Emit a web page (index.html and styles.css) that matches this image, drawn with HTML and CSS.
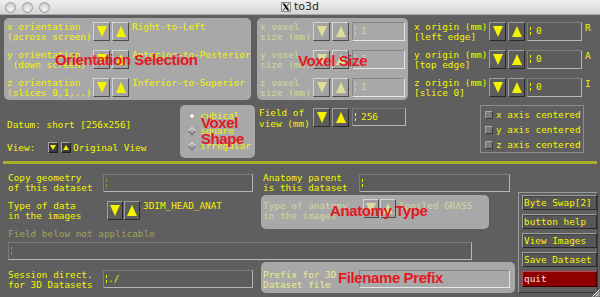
FILE: index.html
```html
<!DOCTYPE html>
<html lang="en">
<head>
    <meta charset="UTF-8">
    <title>to3d</title>
    <link rel="stylesheet" href="styles.css">
</head>
<body>
<div class="window">
    <div class="titlebar">
        <div class="lights"><span></span><span></span><span></span></div>
        <div class="title">
            <svg class="xlogo" width="10" height="10" viewBox="0 0 10 10">
                <rect x="0.5" y="0.5" width="9" height="9" fill="#e6e6e6" stroke="#8a8a8a"/>
                <polygon points="1.5,1.5 3.8,1.5 8.5,8.5 6.2,8.5" fill="#111"/>
                <polygon points="7.6,1.5 8.5,1.5 2.4,8.5 1.5,8.5" fill="#111"/>
            </svg>
            <span>to3d</span>
        </div>
        <div></div>
    </div>

    <div class="top">
        <div class="panel orient">
            <div class="row">
                <div class="lbl">x orientation<br>(across screen)</div>
                <div class="arrows"><span class="abtn dn"></span><span class="abtn up"></span></div>
                <div class="val">Right-to-Left</div>
            </div>
            <div class="row">
                <div class="lbl">y orientation<br>&nbsp;(down screen)</div>
                <div class="arrows"><span class="abtn dn"></span><span class="abtn up"></span></div>
                <div class="val">Anterior-to-Posterior</div>
            </div>
            <div class="row">
                <div class="lbl">z orientation<br>(slices 0,1,..)</div>
                <div class="arrows"><span class="abtn dn"></span><span class="abtn up"></span></div>
                <div class="val">Inferior-to-Superior</div>
            </div>
        </div>

        <div class="panel voxel dim">
            <div class="row">
                <div class="lbl">x voxel<br>size (mm)</div>
                <div class="arrows"><span class="abtn dn"></span><span class="abtn up"></span></div>
                <div class="field light"><i class="caret"></i><span>1</span></div>
            </div>
            <div class="row">
                <div class="lbl">y voxel<br>size (mm)</div>
                <div class="arrows"><span class="abtn dn"></span><span class="abtn up"></span></div>
                <div class="field light"><i class="caret"></i><span>1</span></div>
            </div>
            <div class="row">
                <div class="lbl">z voxel<br>size (mm)</div>
                <div class="arrows"><span class="abtn dn"></span><span class="abtn up"></span></div>
                <div class="field light"><i class="caret"></i><span>1</span></div>
            </div>
        </div>

        <div class="origin">
            <div class="row">
                <div class="lbl">x origin (mm)<br>[left edge]</div>
                <div class="arrows"><span class="abtn dk dn"></span><span class="abtn dk up"></span></div>
                <div class="field dark"><i class="caret"></i><span>0</span></div>
                <div class="letter">R</div>
            </div>
            <div class="row">
                <div class="lbl">y origin (mm)<br>[top edge]</div>
                <div class="arrows"><span class="abtn dk dn"></span><span class="abtn dk up"></span></div>
                <div class="field dark"><i class="caret"></i><span>0</span></div>
                <div class="letter">A</div>
            </div>
            <div class="row">
                <div class="lbl">z origin (mm)<br>[slice 0]</div>
                <div class="arrows"><span class="abtn dk dn"></span><span class="abtn dk up"></span></div>
                <div class="field dark"><i class="caret"></i><span>0</span></div>
                <div class="letter">I</div>
            </div>
        </div>
    </div>

    <div class="middle">
        <div class="info">
            <div>Datum: short [256x256]</div>
            <div class="view">
                <span class="vl">View:</span>
                <span class="sb dn"></span><span class="sb up"></span>
                <span>Original View</span>
            </div>
        </div>

        <div class="panel shape">
            <div class="radio"><span class="dia on"></span>cubical</div>
            <div class="radio"><span class="dia"></span>square</div>
            <div class="radio"><span class="dia"></span>irregular</div>
        </div>

        <div class="fov">
            <div class="lbl">Field of<br>view (mm)</div>
            <div class="arrows"><span class="abtn dk dn"></span><span class="abtn dk up"></span></div>
            <div class="field dark short"><i class="caret"></i><span>256</span></div>
        </div>

        <div class="axis">
            <div class="check"><span class="chk"></span>x axis centered</div>
            <div class="check"><span class="chk"></span>y axis centered</div>
            <div class="check"><span class="chk"></span>z axis centered</div>
        </div>
    </div>

    <div class="sep"></div>

    <div class="bottom">
        <div class="bmain">
            <div class="line-a">
                <div class="lbl wide">Copy geometry<br>of this dataset</div>
                <div class="field dark w150"><i class="caret faint"></i></div>
                <div class="lbl wide2">Anatomy parent<br>is this dataset</div>
                <div class="field dark w151"><i class="caret"></i></div>
            </div>

            <div class="line-b">
                <div class="dtype">
                    <div class="lbl">Type of data<br>in the images</div>
                    <div class="arrows tight"><span class="abtn dk dn"></span><span class="abtn dk up"></span></div>
                    <div class="val">3DIM_HEAD_ANAT</div>
                </div>
                <div class="panel anat dim">
                    <div class="lbl">Type of anatomy<br>in the images</div>
                    <div class="arrows tight"><span class="abtn dn"></span><span class="abtn up"></span></div>
                    <div class="val">Spoiled GRASS</div>
                </div>
            </div>

            <div class="na">Field below not applicable</div>
            <div class="field dark long"><i class="caret faint"></i></div>

            <div class="line-d">
                <div class="sess">
                    <div class="lbl wide">Session direct.<br>for 3D Datasets</div>
                    <div class="field dark w150"><i class="caret"></i><span class="tight-val">./</span></div>
                </div>
                <div class="panel prefix">
                    <div class="lbl wide2">Prefix for 3D<br>Dataset file</div>
                    <div class="field light w151"></div>
                </div>
            </div>
        </div>

        <div class="side">
            <div class="pbtn">Byte Swap[2]</div>
            <div class="pbtn">button help</div>
            <div class="pbtn">View Images</div>
            <div class="pbtn">Save Dataset</div>
            <div class="pbtn quit">quit</div>
        </div>
    </div>

    <!-- red annotation labels laid over the dialog -->
    <div class="note n-orient">Orientation Selection</div>
    <div class="note n-voxel">Voxel Size</div>
    <div class="note n-shape">Voxel<br>Shape</div>
    <div class="note n-anat">Anatomy Type</div>
    <div class="note n-prefix">Filename Prefix</div>

    <svg class="grip" width="9" height="9" viewBox="0 0 9 9">
        <path d="M8.5 1.5 L1.5 8.5 M8.5 4.5 L4.5 8.5 M8.5 7 L7 8.5" stroke="#f2f2f2" stroke-width="1"/>
        <path d="M8.5 2.5 L2.5 8.5 M8.5 5.5 L5.5 8.5" stroke="#8a8a8a" stroke-width="1"/>
    </svg>
</div>
</body>
</html>
```

FILE: styles.css
```css
* {
    box-sizing: border-box;
}
body {
    margin: 0;
    background: #5f5f5f;
    font-family: "DejaVu Sans Mono", "Liberation Mono", monospace;
    font-size: 9.4px;
    line-height: 10px;
    color: #f4f400;
}
.window {
    position: relative;
    width: 600px;
    height: 297px;
    overflow: hidden;
    background: #5f5f5f;
}

/* mac title bar */
.titlebar {
    height: 15px;
    display: grid;
    grid-template-columns: 1fr auto 1fr;
    align-items: center;
    background: linear-gradient(#efefef, #d5d5d5);
    border-bottom: 1px solid #a9a9a9;
}
.lights {
    display: flex;
    gap: 6px;
    padding-left: 5px;
}
.lights span {
    width: 11px;
    height: 11px;
    border-radius: 50%;
    border: 1px solid #9c9c9c;
    background: radial-gradient(circle at 50% 70%, #f4f4f4, #c4c4c4);
}
.title {
    display: flex;
    align-items: center;
    gap: 3px;
    font-family: "DejaVu Sans", sans-serif;
    font-size: 11px;
    line-height: 12px;
    color: #2a2a2a;
}

/* shared widgets */
.panel {
    background: #a8a8a8;
    border-radius: 5px;
}
.row {
    display: flex;
    height: 19px;
}
.lbl {
    white-space: nowrap;
}
.val {
    margin-left: 3px;
    white-space: nowrap;
}
.arrows {
    display: flex;
    gap: 2px;
}
.arrows.tight {
    gap: 1px;
}
.abtn {
    width: 17px;
    height: 19px;
    display: flex;
    align-items: center;
    justify-content: center;
    background: #a3a3a3;
    border: 1px solid;
    border-color: #d4d4d4 #4c4c4c #4c4c4c #d4d4d4;
    color: #f4f400;
}
.arrows.tight .abtn {
    width: 16px;
}
.abtn::before {
    content: "";
    border-left: 5px solid transparent;
    border-right: 5px solid transparent;
}
.abtn.dn::before {
    border-top: 11px solid currentColor;
}
.abtn.up::before {
    border-bottom: 11px solid currentColor;
}
.abtn.dk {
    background: #5d5d5d;
    border-color: #a0a0a0 #2a2a2a #2a2a2a #a0a0a0;
}
.field {
    height: 19px;
    display: flex;
    align-items: flex-start;
    padding: 3px 0 0 1px;
    border: 1px solid;
    white-space: nowrap;
}
.field.dark {
    background: #5c5c5c;
    border-color: #7c7c7c #b6b6b6 #b6b6b6 #7c7c7c;
}
.field.light {
    background: #a9a9a9;
    border-color: #868686 #e6e6e6 #e6e6e6 #868686;
}
.caret {
    width: 1px;
    height: 8px;
    margin: 1px 5px 0 1px;
    background: linear-gradient(currentColor 0 38%, transparent 38% 62%, currentColor 62%);
}
.caret.faint {
    color: #9c9c4c;
}
.tight-val {
    margin-left: -4px;
}

/* insensitive widgets */
.dim {
    color: #d6d69a;
}
.dim .abtn {
    color: #dcdc9c;
}

/* top block */
.top {
    display: flex;
    height: 85px;
    padding: 3px 0 0 4px;
}
.orient {
    width: 247px;
    height: 82px;
    padding: 4px 0 0 3px;
    display: flex;
    flex-direction: column;
    gap: 9px;
}
.orient .lbl {
    width: 86px;
}
.voxel {
    width: 151px;
    height: 82px;
    margin-left: 6px;
    padding: 4px 0 0 3px;
    display: flex;
    flex-direction: column;
    gap: 9px;
}
.voxel .lbl {
    width: 53px;
}
.voxel .field {
    width: 53px;
    margin-left: 3px;
}
.origin {
    margin-left: 6px;
    padding-top: 4px;
    display: flex;
    flex-direction: column;
    gap: 9px;
}
.origin .lbl {
    width: 75px;
}
.origin .field {
    width: 55px;
    margin-left: 2px;
}
.letter {
    margin: 1px 0 0 3px;
}

/* middle block */
.middle {
    display: flex;
    height: 61px;
}
.info {
    width: 180px;
    padding: 20px 0 0 7px;
}
.view {
    display: flex;
    align-items: center;
    height: 11px;
    margin-top: 12px;
}
.vl {
    width: 41px;
}
.sb {
    width: 10px;
    height: 11px;
    margin-right: 3px;
    display: flex;
    align-items: center;
    justify-content: center;
    background: #3c3c3c;
    border: 1px solid;
    border-color: #a4a4a4 #1e1e1e #1e1e1e #a4a4a4;
}
.sb + .sb {
    margin-right: 2px;
}
.sb::before {
    content: "";
    border-left: 3px solid transparent;
    border-right: 3px solid transparent;
}
.sb.dn::before {
    border-top: 5px solid #f4f400;
}
.sb.up::before {
    border-bottom: 5px solid #f4f400;
}
.shape {
    width: 75px;
    height: 53px;
    margin-top: 5px;
    padding: 3px 0 0 8px;
}
.radio {
    display: flex;
    align-items: center;
    height: 15px;
}
.dia {
    width: 6px;
    height: 6px;
    margin: 0 5px 0 1px;
    transform: rotate(45deg);
    background: #a8a8a8;
    border: 1px solid;
    border-color: #dadada #6a6a6a #6a6a6a #dadada;
}
.dia.on {
    background: #f6f6d8;
    border-color: #8a8a8a;
}
.fov {
    display: flex;
    height: 19px;
    margin: 8px 0 0 4px;
}
.fov .lbl {
    width: 54px;
    line-height: 10.5px;
}
.fov .field {
    width: 54px;
    height: 18px;
    margin-left: 3px;
}
.axis {
    width: 104px;
    height: 48px;
    margin: 5px 0 0 74px;
    padding: 1px 0 0 4px;
    border: 1px solid #8e8e8e;
}
.check {
    display: flex;
    align-items: center;
    height: 15px;
}
.chk {
    width: 8px;
    height: 8px;
    margin-right: 3px;
    background: #7a7a7a;
    border: 1px solid;
    border-color: #a8a8a8 #383838 #383838 #a8a8a8;
}

.sep {
    height: 3px;
    margin: 0 3px;
    background: #acac2c;
}

/* bottom block */
.bottom {
    display: flex;
}
.bmain {
    width: 518px;
}
.line-a {
    display: flex;
    align-items: center;
    height: 19px;
    margin-top: 9px;
    padding-left: 8px;
}
.lbl.wide {
    width: 95px;
}
.lbl.wide2 {
    width: 96px;
}
.line-a .lbl.wide2 {
    margin-left: 10px;
}
.w150 {
    width: 150px;
}
.w151 {
    width: 151px;
}
.line-a .field,
.line-d .field {
    height: 18px;
}
.line-b {
    display: flex;
    height: 34px;
    margin-top: 3px;
}
.dtype {
    width: 261px;
    display: flex;
    padding: 6px 0 0 8px;
}
.dtype .lbl {
    width: 99px;
}
.anat {
    width: 228px;
    height: 34px;
    display: flex;
    padding: 4px 0 0 2px;
}
.anat .lbl {
    width: 100px;
    margin-top: 2px;
}
.anat .val {
    margin-top: 2px;
}
.na {
    height: 10px;
    padding-left: 8px;
    color: #a2a25a;
}
.field.long {
    width: 464px;
    height: 18px;
    margin: 3px 0 0 8px;
}
.line-d {
    display: flex;
    height: 31px;
    margin-top: 2px;
}
.sess {
    width: 261px;
    display: flex;
    padding: 8px 0 0 8px;
}
.prefix {
    width: 254px;
    height: 31px;
    display: flex;
    padding: 8px 0 0 2px;
    color: #ecec8c;
}

/* push buttons on the right */
.side {
    width: 80px;
    height: 101px;
    margin-top: 28px;
    padding: 2px 0 0 3px;
    display: flex;
    flex-direction: column;
    gap: 4px;
    border: 1px solid;
    border-color: #9c9c9c #3c3c3c #3c3c3c #9c9c9c;
}
.pbtn {
    width: 75px;
    height: 15px;
    padding-left: 1px;
    line-height: 13px;
    background: #575757;
    border: 1px solid;
    border-color: #a0a0a0 #2a2a2a #2a2a2a #a0a0a0;
    box-shadow: inset 1px 1px 0 #444;
}
.pbtn.quit {
    height: 16px;
    line-height: 14px;
    background: #8e0000;
    color: #f6e6e6;
    border-color: #c04848 #3a0000 #3a0000 #c04848;
    box-shadow: none;
}

/* annotation overlay */
.note {
    position: absolute;
    font-family: "Liberation Sans", Arial, sans-serif;
    font-weight: bold;
    font-size: 15px;
    line-height: 15px;
    letter-spacing: -0.4px;
    color: #e3191f;
    white-space: nowrap;
}
.n-orient { left: 55px; top: 52px; }
.n-voxel { left: 298px; top: 53px; }
.n-shape { left: 201px; top: 115px; line-height: 16px; }
.n-anat { left: 330px; top: 203px; }
.n-prefix { left: 338px; top: 270px; }

.grip {
    position: absolute;
    right: 0;
    bottom: 0;
}
```
